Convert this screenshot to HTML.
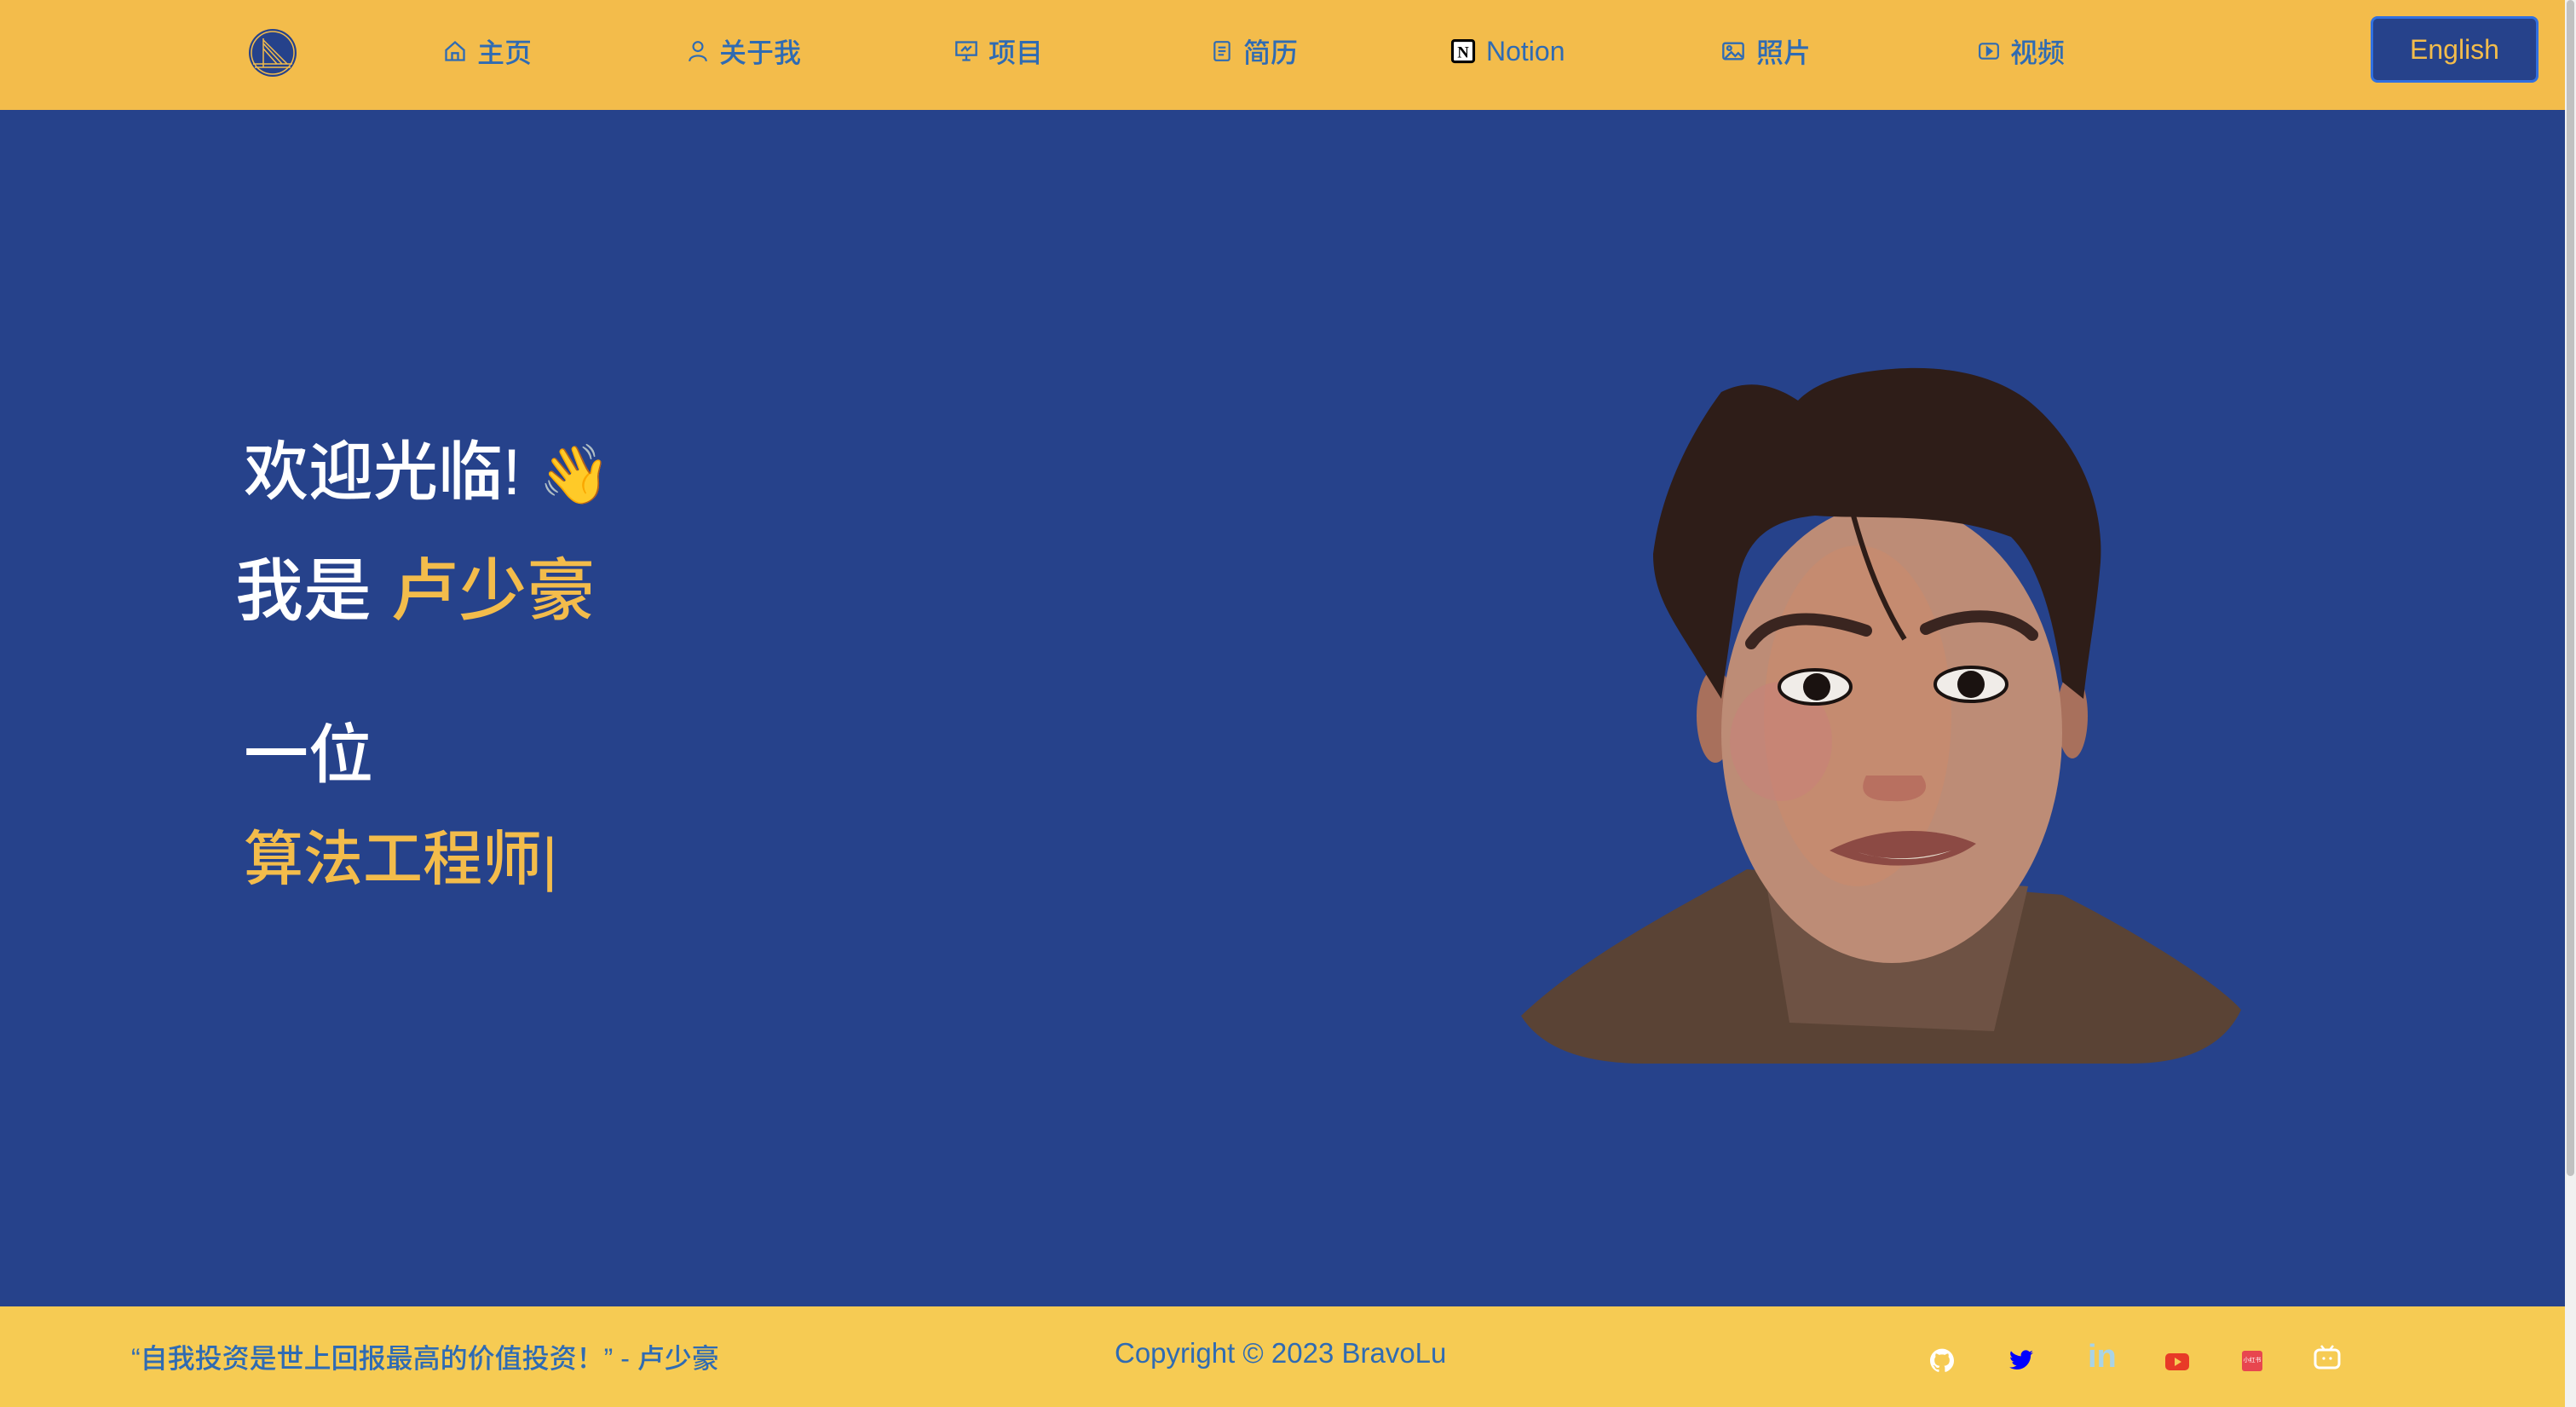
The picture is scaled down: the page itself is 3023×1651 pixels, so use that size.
<!DOCTYPE html>
<html><head><meta charset="utf-8"><style>
*{margin:0;padding:0;box-sizing:border-box}
body{width:3023px;height:1651px;overflow:hidden;background:#26428B;font-family:"Liberation Sans","Noto Sans CJK SC",sans-serif;position:relative}
.nav{position:absolute;left:0;top:0;width:3010px;height:129px;background:#F3BC4B}
.ni{position:absolute;top:38px;height:44px;display:flex;align-items:center;color:#2F6BB3;font-size:32px;font-weight:500}
.ni svg{margin-right:12px}
.btn{position:absolute;left:2782px;top:19px;width:197px;height:78px;background:#26428B;border:3px solid #3170E0;border-radius:8px;color:#F3BC4B;font-size:32px;display:flex;align-items:center;justify-content:center}
.main{position:absolute;left:0;top:129px;width:3010px;height:1404px;background:#26428B}
.t{position:absolute;color:#fff;font-weight:500;white-space:nowrap;line-height:1}
.y{color:#F3BC4B}
.foot{position:absolute;left:0;top:1533px;width:3010px;height:118px;background:#F6CB53}
.scroll{position:absolute;left:3010px;top:0;width:13px;height:1651px;background:#f1f1f1}
.scroll div{position:absolute;left:2px;top:0;width:9px;height:1380px;background:#c1c1c1;border-radius:5px}
</style></head><body>
<div class="nav">
 <svg style="position:absolute;left:289px;top:31px" width="62" height="62" viewBox="0 0 62 62"><circle cx="31" cy="31" r="30" fill="#F3BC4B"/><circle cx="31" cy="31" r="28" fill="#26428B"/><circle cx="31" cy="31" r="25" fill="none" stroke="#F3BC4B" stroke-width="1.5"/><path d="M20 14 L20 48 M20 16 L48 44 M20 20 L42 44 M20 26 L36 44 M8 44 H54 M10 48 H52" stroke="#F3BC4B" stroke-width="1.5" fill="none"/></svg>
 <div class="ni" style="left:520px"><svg width="28" height="28" viewBox="0 0 24 24" fill="none" stroke="#2F6BB3" stroke-width="2"><path d="M3 11 L12 3 L21 11 V21 H3 Z M9 21 V14 H15 V21"/></svg>主页</div>
 <div class="ni" style="left:806px"><svg width="26" height="28" viewBox="0 0 24 24" fill="none" stroke="#2F6BB3" stroke-width="2"><circle cx="12" cy="7" r="5"/><path d="M3 23 C3 15 21 15 21 23"/></svg>关于我</div>
 <div class="ni" style="left:1120px"><svg width="28" height="28" viewBox="0 0 24 24" fill="none" stroke="#2F6BB3" stroke-width="2"><rect x="2" y="3" width="20" height="13"/><path d="M7 12 L11 8 L13 11 L17 7 M12 16 V21 M8 21 H16"/></svg>项目</div>
 <div class="ni" style="left:1421px"><svg width="26" height="28" viewBox="0 0 24 24" fill="none" stroke="#2F6BB3" stroke-width="2"><rect x="4" y="2" width="16" height="20" rx="2"/><path d="M8 8 H16 M8 12 H16 M8 16 H14"/></svg>简历</div>
 <div class="ni" style="left:1702px"><svg width="30" height="32" viewBox="0 0 24 24"><rect x="2" y="2" width="20" height="20" rx="2" fill="#fff" stroke="#000" stroke-width="2.5"/><text x="12" y="18" font-size="15" font-family="Liberation Serif" font-weight="bold" text-anchor="middle" fill="#000">N</text></svg>Notion</div>
 <div class="ni" style="left:2019px"><svg width="30" height="28" viewBox="0 0 24 24" fill="none" stroke="#2F6BB3" stroke-width="2"><rect x="2" y="4" width="20" height="16" rx="2"/><circle cx="8" cy="9" r="2"/><path d="M4 19 L10 13 L14 17 L17 14 L21 18"/></svg>照片</div>
 <div class="ni" style="left:2321px"><svg width="26" height="26" viewBox="0 0 24 24" fill="none" stroke="#2F6BB3" stroke-width="2"><rect x="2" y="4" width="20" height="16" rx="3"/><path d="M10 8 L15 12 L10 16 Z" fill="#2F6BB3"/></svg>视频</div>
 <div class="btn">English</div>
</div>
<div class="main"></div>
<div class="t" style="left:286px;top:517px;font-size:76px">欢迎光临! <span style="font-size:68px">👋</span></div>
<div class="t" style="left:276px;top:654px;font-size:80px">我是 <span class="y">卢少豪</span></div>
<div class="t" style="left:286px;top:849px;font-size:76px">一位</div>
<div class="t y" style="left:286px;top:973px;font-size:70px">算法工程师<span style="font-weight:300">|</span></div>

<svg style="position:absolute;left:1780px;top:420px" width="870" height="830" viewBox="0 0 870 830">
 <path d="M5 772 C80 700 200 640 270 600 L640 630 C740 680 830 740 850 765 Q820 828 720 828 L150 828 Q40 828 5 772 Z" fill="#5a4335"/>
 <path d="M290 600 L320 780 L560 790 L600 620 Z" fill="#6e5244"/>
 <ellipse cx="233" cy="420" rx="22" ry="55" fill="#a8705c"/>
 <ellipse cx="652" cy="420" rx="18" ry="50" fill="#a8705c"/>
 <ellipse cx="440" cy="440" rx="200" ry="270" fill="#bd8c76"/>
 <ellipse cx="400" cy="420" rx="110" ry="200" fill="#c98a6c" opacity="0.6"/>
 <ellipse cx="310" cy="450" rx="60" ry="70" fill="#c97f7a" opacity="0.5"/>
 <path d="M160 230 C170 150 210 80 240 40 C270 25 300 30 330 50 C350 30 380 20 420 15 C500 5 560 20 600 50 C650 90 690 160 685 240 C680 300 670 350 665 400 L640 380 C630 300 610 240 580 210 C500 180 420 190 350 185 C300 190 270 210 260 260 L240 400 L215 360 C185 310 160 280 160 230 Z" fill="#2e1d18"/>
 <path d="M395 185 C410 240 430 290 455 330" stroke="#2e1d18" stroke-width="6" fill="none"/>
 <path d="M275 335 C300 300 350 300 410 320" stroke="#3a2520" stroke-width="14" fill="none" stroke-linecap="round"/>
 <path d="M480 318 C530 295 580 300 605 325" stroke="#3a2520" stroke-width="14" fill="none" stroke-linecap="round"/>
 <ellipse cx="350" cy="386" rx="42" ry="20" fill="#f0ece8" stroke="#1a1210" stroke-width="4"/>
 <circle cx="352" cy="386" r="16" fill="#1a1210"/>
 <ellipse cx="533" cy="383" rx="42" ry="20" fill="#f0ece8" stroke="#1a1210" stroke-width="4"/>
 <circle cx="533" cy="383" r="16" fill="#1a1210"/>
 <path d="M410 490 C400 510 410 520 440 520 C470 522 490 510 475 490" fill="#b87060"/>
 <path d="M367 578 C420 550 490 548 539 570 C500 600 420 605 367 578 Z" fill="#8c4a44"/>
 <path d="M400 580 C430 590 470 590 510 578 C480 590 440 592 400 580 Z" fill="#e8e0d0"/>
</svg>

<div class="foot">
 <div style="position:absolute;left:154px;top:36px;font-size:32px;color:#2F6BB3;font-weight:500;white-space:nowrap">“自我投资是世上回报最高的价值投资！” - 卢少豪</div>
 <div style="position:absolute;left:1308px;top:36px;font-size:33px;color:#2F6BB3;white-space:nowrap">Copyright © 2023 BravoLu</div>
 <svg style="position:absolute;left:2265px;top:49px" width="28" height="28" viewBox="0 0 24 24"><path fill="#fff" d="M12 .5C5.4.5 0 5.9 0 12.5c0 5.3 3.4 9.8 8.2 11.4.6.1.8-.3.8-.6v-2c-3.3.7-4-1.6-4-1.6-.5-1.4-1.3-1.8-1.3-1.8-1.1-.7.1-.7.1-.7 1.2.1 1.800 1.2 1.8 1.2 1.1 1.8 2.8 1.3 3.5 1 .1-.8.4-1.3.8-1.6-2.7-.3-5.5-1.300-5.5-5.9 0-1.3.5-2.4 1.2-3.2-.1-.3-.5-1.5.1-3.2 0 0 1-.3 3.3 1.2a11.5 11.5 0 0 1 6 0c2.3-1.5 3.3-1.2 3.3-1.2.7 1.7.2 2.9.1 3.2.8.8 1.2 1.9 1.2 3.2 0 4.6-2.8 5.6-5.5 5.9.4.4.8 1.1.8 2.2v3.3c0 .3.2.7.8.6A12 12 0 0 0 24 12.5C24 5.9 18.6.5 12 .5z"/></svg>
 <svg style="position:absolute;left:2358px;top:50px" width="28" height="26" viewBox="0 0 24 20"><path fill="#0000ff" d="M24 2.3a10 10 0 0 1-2.8.8A5 5 0 0 0 23.3.4a10 10 0 0 1-3.1 1.2A4.9 4.9 0 0 0 11.8 6 14 14 0 0 1 1.7.9a4.9 4.9 0 0 0 1.5 6.6A4.9 4.9 0 0 1 1 6.9a4.9 4.9 0 0 0 3.9 4.8 4.9 4.9 0 0 1-2.2.1 4.9 4.9 0 0 0 4.6 3.4A9.9 9.9 0 0 1 0 17.2 14 14 0 0 0 7.5 19.4c9.1 0 14-7.5 14-14v-.6A10 10 0 0 0 24 2.3z"/></svg>
 <div style="position:absolute;left:2450px;top:38px;font-size:38px;font-weight:bold;color:#A9D3E6">in</div>
 <svg style="position:absolute;left:2541px;top:55px" width="28" height="20" viewBox="0 0 28 20"><rect width="28" height="20" rx="5" fill="#E83A27"/><path d="M11 5 L19 10 L11 15 Z" fill="#F6CB53"/></svg>
 <div style="position:absolute;left:2631px;top:52px;width:24px;height:24px;background:#E8464F;border-radius:3px;color:#fff;font-size:7px;line-height:24px;text-align:center">小红书</div>
 <svg style="position:absolute;left:2715px;top:44px" width="32" height="30" viewBox="0 0 32 30"><path d="M9 2 L13 7 M23 2 L19 7" stroke="#fff" stroke-width="2.5"/><rect x="2" y="7" width="28" height="21" rx="5" fill="none" stroke="#fff" stroke-width="3"/><circle cx="12" cy="17" r="1.6" fill="#fff"/><circle cx="20" cy="17" r="1.6" fill="#fff"/></svg>
</div>
<div class="scroll"><div></div></div>
</body></html>
